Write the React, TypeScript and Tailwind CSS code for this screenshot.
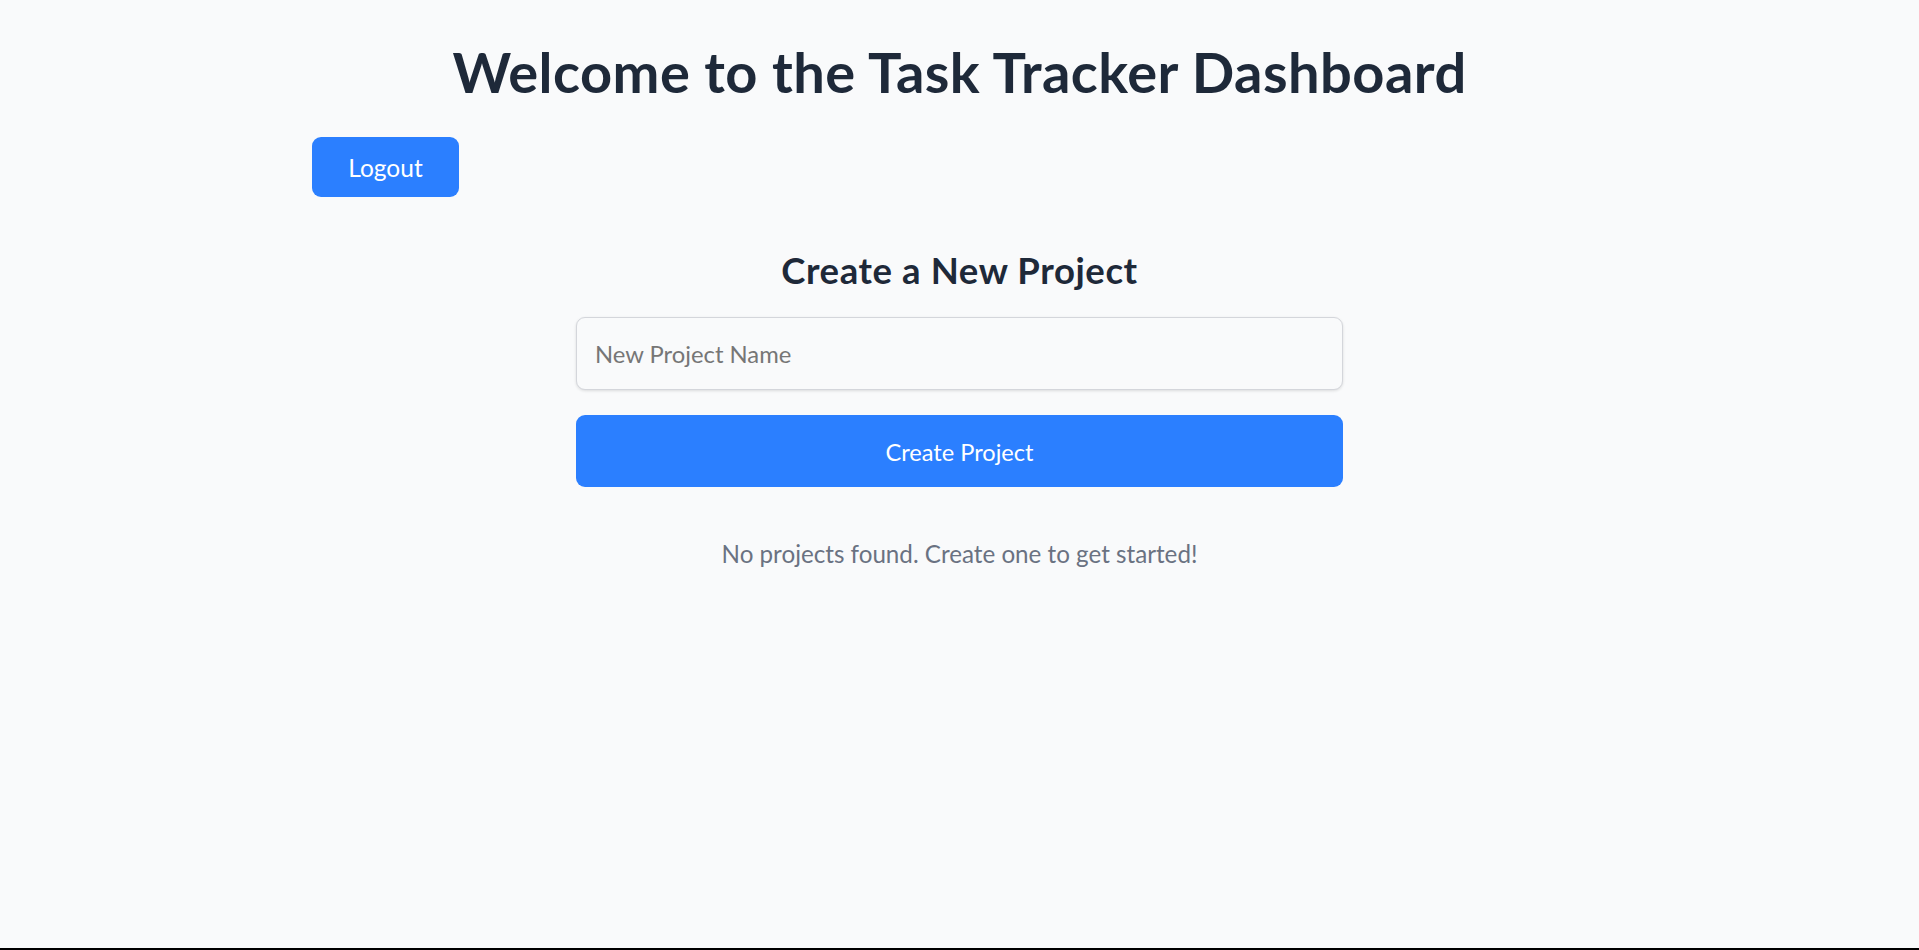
import React, { useState } from "react";

export default function App() {
  const [name, setName] = useState("");
  return (
    <div
      className="h-screen bg-gray-50 border-b-2 border-black text-gray-800 overflow-hidden"
      style={{ fontFamily: "Lato, 'Noto Sans', sans-serif" }}
    >
      <div className="max-w-[1295px] mx-auto pt-[39px] flex flex-col">
        <h1 className="text-center text-[56px] leading-[66px] font-bold tracking-[0.45px]">
          Welcome to the Task Tracker Dashboard
        </h1>
        <div className="mt-[32px]">
          <button className="w-[147px] h-[60px] rounded-[9px] bg-[#2b7fff] text-white text-[24.5px] leading-[30px] flex items-center justify-center pt-[1px]">
            Logout
          </button>
        </div>

        <div className="w-[767px] mx-auto mt-[51px] flex flex-col">
          <h2 className="text-center text-[36.5px] leading-[44px] font-bold tracking-[0.6px]">
            Create a New Project
          </h2>
          <input
            type="text"
            value={name}
            onChange={(e) => setName(e.target.value)}
            placeholder="New Project Name"
            className="mt-[25px] h-[73px] w-full rounded-[9px] border border-[#d4d6db] bg-gray-50 pl-[18px] pr-4 text-[23.8px] shadow-[0_1px_3px_rgba(0,0,0,0.12)] outline-none placeholder:text-[#767676]"
          />
          <button className="mt-[25px] h-[72px] w-full rounded-[9px] bg-[#2b7fff] text-white text-[23.6px] leading-[30px] flex items-center justify-center pt-[2px]">
            Create Project
          </button>
          <p className="mt-[51px] text-center text-[24.2px] leading-[32px] text-[#6a7282]">
            No projects found. Create one to get started!
          </p>
        </div>
      </div>
    </div>
  );
}
